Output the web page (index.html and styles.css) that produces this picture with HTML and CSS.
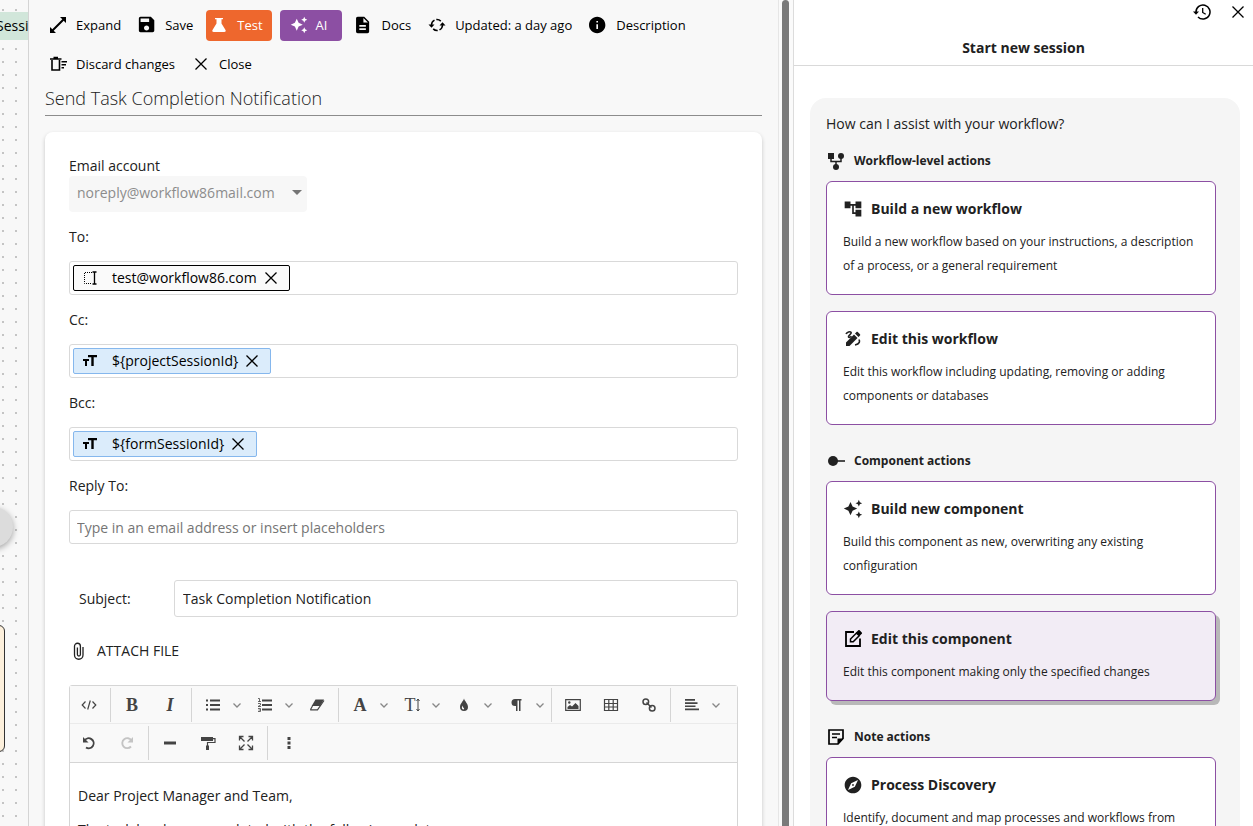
FILE: index.html
```
<!DOCTYPE html>
<html lang="en">
<head>
<meta charset="utf-8">
<meta name="viewport" content="width=device-width, initial-scale=1">
<title>Send Task Completion Notification</title>
<link rel="stylesheet" href="styles.css">
</head>
<body>
<svg class="sprite" aria-hidden="true">
  <symbol id="i-x" viewBox="0 0 18 18"><path d="M3.500 3.500l11 11M14.500 3.500l-11 11" fill="none" stroke="currentColor" stroke-width="1.300"/></symbol>
  <symbol id="i-sparkle" viewBox="0 0 24 24"><path d="M9 3.500l2.500 5.500L17 11.500l-5.500 2.500L9 19.500l-2.500-5.500L1 11.500l5.500-2.500zM19 1l1.200 2.800L23 5l-2.800 1.200L19 9l-1.200-2.800L15 5l2.800-1.200zM19 15l1.200 2.800L23 19l-2.800 1.200L19 23l-1.200-2.800L15 19l2.800-1.200z"/></symbol>
  <symbol id="i-chev" viewBox="0 0 10 10"><path d="M1.500 3.500L5 7l3.500-3.500" fill="none" stroke="#888" stroke-width="1.300"/></symbol>
  <symbol id="i-tt" viewBox="0 0 16 14"><path d="M6 1h9v2.300h-3.300V12H9.300V3.300H6zM1 5h6v2H5v5H3V7H1z"/></symbol>
</svg>
<div class="app">
  <div class="canvas" aria-hidden="true">
    <div class="node node-green">Session</div>
    <div class="node-round"></div>
    <div class="node node-beige"></div>
  </div>

  <main class="editor">
    <div class="editor-body">
      <div class="actions">
        <button class="action" type="button"><svg class="icon" viewBox="0 0 18 18"><path d="M11 1h6v6l-2.300-2.300L4.700 14.700 7 17H1v-6l2.300 2.300 10-10z"/></svg>Expand</button>
        <button class="action" type="button"><svg class="icon" viewBox="2 2 21 21"><path d="M17 3H5c-1.100 0-2 .9-2 2v14c0 1.100.9 2 2 2h14c1.100 0 2-.9 2-2V7l-4-4zm-5 16c-1.660 0-3-1.340-3-3s1.340-3 3-3 3 1.340 3 3-1.340 3-3 3zm3-10H5V5h10v4z"/></svg>Save</button>
        <button class="action action-test" type="button"><svg class="icon" viewBox="0 0 18 18"><path d="M5 2h8v1.300h-1.500v4.200l4 6.500c.6 1-.1 2-1.200 2H3.700c-1.100 0-1.800-1-1.200-2l4-6.500V3.300H5z"/></svg>Test</button>
        <button class="action action-ai" type="button"><svg class="icon"><use href="#i-sparkle"/></svg>AI</button>
        <button class="action" type="button"><svg class="icon" viewBox="2 1 21 22"><path d="M14 2H6c-1.100 0-1.990.9-1.990 2L4 20c0 1.100.890 2 1.990 2H18c1.100 0 2-.9 2-2V8l-6-6zm2 16H8v-2h8v2zm0-4H8v-2h8v2zm-3-5V3.500L18.500 9H13z"/></svg>Docs</button>
        <button class="action" type="button"><svg class="icon" viewBox="0 0 18 18"><path d="M3.500 9.500V9a5.500 5.500 0 0 1 3-4.900M8.300 3.500a5.500 5.500 0 0 1 4.500 1.600M14.500 8.500V9a5.500 5.500 0 0 1-3 4.900M9.700 14.500a5.500 5.500 0 0 1-4.500-1.600" fill="none" stroke="currentColor" stroke-width="1.500"/><path d="M.5 8.500h6l-3 3.200zM11.500 9.500h6l-3-3.200z"/></svg>Updated: a day ago</button>
        <button class="action" type="button"><svg class="icon" viewBox="2 1 22 22"><path d="M12 2C6.480 2 2 6.480 2 12s4.480 10 10 10 10-4.480 10-10S17.520 2 12 2zm1 15h-2v-6h2v6zm0-8h-2V7h2v2z"/></svg>Description</button>
        <button class="action" type="button"><svg class="icon" viewBox="0 0 18 18"><path d="M3 5v10h7.500V5M1 4h11.500M4.500 2.500h4.500" fill="none" stroke="currentColor" stroke-width="1.600"/><path d="M12.500 6H18v1.500h-5.500zM12.500 9H17v1.500h-4.500zM12.500 12H15v1.500h-2.500z"/></svg>Discard changes</button>
        <button class="action" type="button"><svg class="icon"><use href="#i-x"/></svg>Close</button>
      </div>

      <input class="title" type="text" aria-label="Component name" value="Send Task Completion Notification">

      <form class="card">
        <label class="label" for="account">Email account</label>
        <div class="select-wrap">
          <select class="select" id="account" disabled><option>noreply@workflow86mail.com</option></select>
        </div>

        <div class="field">
          <label class="label" for="to">To:</label>
          <div class="box">
            <span class="chip chip-plain"><svg class="chip-icon" viewBox="0 0 16 16"><path d="M10 2.500H2.500v11H10" fill="none" stroke="currentColor" stroke-dasharray="1 1"/><path d="M10.500 2h4M10.500 14h4M12.500 2v12" fill="none" stroke="currentColor" stroke-width="1.300"/></svg>test@workflow86.com<button class="chip-x" type="button" aria-label="Remove"><svg class="icon"><use href="#i-x"/></svg></button></span>
            <input class="box-input" id="to" type="text">
          </div>
        </div>
        <div class="field">
          <label class="label" for="cc">Cc:</label>
          <div class="box">
            <span class="chip"><svg class="chip-icon"><use href="#i-tt"/></svg>${projectSessionId}<button class="chip-x" type="button" aria-label="Remove"><svg class="icon"><use href="#i-x"/></svg></button></span>
            <input class="box-input" id="cc" type="text">
          </div>
        </div>
        <div class="field">
          <label class="label" for="bcc">Bcc:</label>
          <div class="box">
            <span class="chip"><svg class="chip-icon"><use href="#i-tt"/></svg>${formSessionId}<button class="chip-x" type="button" aria-label="Remove"><svg class="icon"><use href="#i-x"/></svg></button></span>
            <input class="box-input" id="bcc" type="text">
          </div>
        </div>
        <div class="field">
          <label class="label" for="reply">Reply To:</label>
          <div class="box">
            <input class="box-input" id="reply" type="text" placeholder="Type in an email address or insert placeholders">
          </div>
        </div>

        <div class="subject">
          <label class="subject-label" for="subject">Subject:</label>
          <input class="subject-input" id="subject" type="text" value="Task Completion Notification">
        </div>

        <button class="attach" type="button"><svg class="icon" viewBox="0 0 18 18"><path d="M13 5v8a4 4 0 0 1-8.500 0V4.200a2.900 2.900 0 0 1 5.900 0v8.300a1.500 1.500 0 0 1-3 0V5.500" fill="none" stroke="currentColor" stroke-width="1.300"/></svg>ATTACH FILE</button>

        <div class="rich">
          <div class="bar bar-first">
            <div class="group">
              <button class="tool" type="button" aria-label="Code view"><svg class="glyph" viewBox="0 0 16 16"><path d="M4.500 4.500L1.200 8l3.300 3.500M11.500 4.500L14.800 8l-3.300 3.500M9.300 3.500l-2.600 9" fill="none" stroke="currentColor" stroke-width="1.200"/></svg></button>
            </div>
            <div class="group">
              <button class="tool tool-serif" type="button">B</button>
              <button class="tool tool-serif tool-italic" type="button">I</button>
            </div>
            <div class="group">
              <button class="tool tool-drop" type="button" aria-label="Unordered list"><svg class="glyph" viewBox="0 0 16 16"><path d="M5 2.500h10v2H5zM5 7h10v2H5zM5 11.500h10v2H5zM1 2.500h2v2H1zM1 7h2v2H1zM1 11.500h2v2H1z"/></svg><svg class="chev"><use href="#i-chev"/></svg></button>
              <button class="tool tool-drop" type="button" aria-label="Ordered list"><svg class="glyph" viewBox="0 0 16 16"><path d="M5 2.500h10v2H5zM5 7h10v2H5zM5 11.500h10v2H5z"/><path d="M1 1.500h1.500v3M1 4.500h3M1 6.500h2.500v1.500L1 9.500h3M1 11.500h2.500v3H1M1.500 13h2" fill="none" stroke="currentColor" stroke-width=".8"/></svg><svg class="chev"><use href="#i-chev"/></svg></button>
              <button class="tool" type="button" aria-label="Clear formatting"><svg class="glyph" viewBox="0 0 16 16"><path d="M6.500 2.500H15L11 9H2.700z"/><path d="M3 8.500h8M1.500 12.500l2-3.500M1.200 12.800h7.300L15 3.500" fill="none" stroke="currentColor" stroke-width="1.200"/></svg></button>
            </div>
            <div class="group">
              <button class="tool tool-serif tool-drop" type="button"><span class="letter">A</span><svg class="chev"><use href="#i-chev"/></svg></button>
              <button class="tool tool-serif tool-light tool-drop" type="button"><span class="letter">T<svg class="height" viewBox="0 0 4 14"><path d="M2 1v12M.5 3L2 1l1.500 2M.5 11L2 13l1.500-2" fill="none" stroke="currentColor"/></svg></span><svg class="chev"><use href="#i-chev"/></svg></button>
              <button class="tool tool-drop" type="button" aria-label="Text color"><svg class="glyph" viewBox="0 0 16 16"><path fill-rule="evenodd" d="M8 1.500c.5 2.500 4 5 4 8.500a4 4 0 0 1-8 0c0-3.500 3.500-6 4-8.500zM6.500 8.500c-1 1.500-.8 3.500.8 4 1-.1 1-.9.500-1.500-.8-.7-1.200-1.300-1.300-2.500z"/></svg><svg class="chev"><use href="#i-chev"/></svg></button>
              <button class="tool tool-drop" type="button" aria-label="Paragraph format"><svg class="glyph" viewBox="0 0 16 16"><path d="M7 2h6.500v1.500h-1V14H11V3.500H9.500V14H8V9H7a3.500 3.500 0 0 1 0-7z"/></svg><svg class="chev"><use href="#i-chev"/></svg></button>
            </div>
            <div class="group">
              <button class="tool" type="button" aria-label="Insert image"><svg class="glyph" viewBox="0 0 16 16"><path d="M.7 2.700h14.600v10.600H.7z" fill="none" stroke="currentColor" stroke-width="1.200"/><path d="M2.500 12v-2l2.500-2 2 1.500L10.500 6l3 3v3z"/><circle cx="4.300" cy="5.500" r="1.200"/></svg></button>
              <button class="tool" type="button" aria-label="Insert table"><svg class="glyph" viewBox="0 0 16 16"><path d="M1.500 2.500h13v11h-13zM1.500 6.500h13M1.500 10h13M5.800 2.500v11M10.200 2.500v11" fill="none" stroke="currentColor" stroke-width="1.200"/></svg></button>
              <button class="tool" type="button" aria-label="Insert link"><svg class="glyph" viewBox="0 0 16 16"><g fill="none" stroke="currentColor" stroke-width="1.500"><circle cx="4.800" cy="4.800" r="2.800"/><circle cx="11.200" cy="11.200" r="2.800"/><path d="M5.500 5.500l5 5"/></g></svg></button>
            </div>
            <div class="group">
              <button class="tool tool-drop" type="button" aria-label="Align"><svg class="glyph" viewBox="0 0 16 16"><path d="M1 2h10v1.700H1zM1 5.200h12.500v1.700H1zM1 8.400h10.500v1.700H1zM1 11.600h14v1.700H1z"/></svg><svg class="chev"><use href="#i-chev"/></svg></button>
            </div>
          </div>
          <div class="bar">
            <div class="group">
              <button class="tool" type="button" aria-label="Undo"><svg class="glyph" viewBox="0 0 16 16"><path d="M3.500 5.500A5 5 0 1 1 5 12.500" fill="none" stroke="currentColor" stroke-width="1.900"/><path d="M2 2v5.500h5.500z"/></svg></button>
              <button class="tool" type="button" aria-label="Redo" disabled><svg class="glyph" viewBox="0 0 16 16"><path d="M12.500 5.500A5 5 0 1 0 12 11.500" fill="none" stroke="currentColor" stroke-width="1.900"/><path d="M14 2v5.500H8.500z"/></svg></button>
            </div>
            <div class="group">
              <button class="tool" type="button" aria-label="Horizontal line"><svg class="glyph" viewBox="0 0 16 16"><path d="M2 6.500h12v3H2z"/></svg></button>
              <button class="tool" type="button" aria-label="Format painter"><svg class="glyph" viewBox="0 0 16 16"><path d="M1 2h12v4H1zM6 10.500h3V15H6z"/><path d="M13 3.700h2v3.800H7.500V11" fill="none" stroke="currentColor" stroke-width="1.200"/></svg></button>
              <button class="tool" type="button" aria-label="Fullscreen"><svg class="glyph" viewBox="0 0 16 16"><path d="M1.500 5.500v-4h4M10.500 1.500h4v4M14.500 10.500v4h-4M5.500 14.500h-4v-4M1.500 1.500l5 5M14.500 1.500l-5 5M14.500 14.500l-5-5M1.500 14.500l5-5" fill="none" stroke="currentColor" stroke-width="1.300"/></svg></button>
            </div>
            <div class="group">
              <button class="tool" type="button" aria-label="More"><svg class="glyph" viewBox="0 0 16 16"><path d="M6.500 2h3v3h-3zM6.500 6.500h3v3h-3zM6.500 11h3v3h-3z"/></svg></button>
            </div>
          </div>
          <div class="content" contenteditable="true" role="textbox" aria-label="Email body">
            <p>Dear Project Manager and Team,</p>
            <p>The task has been completed with the following updates:</p>
          </div>
        </div>
      </form>
    </div>
    <div class="scrollbar"><div class="thumb"></div></div>
  </main>

  <aside class="chat">
    <header class="chat-head">
      <div class="chat-tools">
        <button class="plain" type="button" aria-label="History"><svg class="icon" viewBox="0 0 18 18"><path d="M3 9.500V9a7 7 0 1 1 2 4.900" fill="none" stroke="currentColor" stroke-width="1.500"/><path d="M0 8.500h6l-3 3.200z"/><path d="M9.700 5v4.500l3 1.800" fill="none" stroke="currentColor" stroke-width="1.300"/></svg></button>
        <button class="plain" type="button" aria-label="Close"><svg class="icon"><use href="#i-x"/></svg></button>
      </div>
      <h2 class="chat-title">Start new session</h2>
    </header>
    <div class="bubble">
      <p class="question">How can I assist with your workflow?</p>

      <section class="section">
        <h3 class="section-title"><svg class="icon20" viewBox="0 0 20 20"><path d="M2 2h6v6H2z"/><circle cx="15" cy="5" r="3"/><circle cx="10" cy="16" r="3"/><path d="M5 7v3.500h10V7M10 10.500V14" fill="none" stroke="currentColor" stroke-width="1.500"/></svg>Workflow-level actions</h3>
        <button class="option" type="button">
          <span class="option-title"><svg class="icon20" viewBox="0 0 24 24"><path d="M22 11V3h-7v3H9V3H2v8h7V8h2v10h4v3h7v-8h-7v3h-2V8h2v3z"/></svg>Build a new workflow</span>
          <span class="option-text">Build a new workflow based on your instructions, a description of a process, or a general requirement</span>
        </button>
        <button class="option" type="button">
          <span class="option-title"><svg class="icon20" viewBox="0 0 20 20"><path d="M3 13.500l8-8 3.500 3.500-8 8H3zM12 4.500l1.500-1.500c.4-.4.9-.4 1.300 0l2.200 2.200c.4.4.4.9 0 1.300L15.500 8z"/><path d="M3 5c1-2 4-2.800 5-1.700C9.200 5 4.500 6.500 5.500 8c.6.8 2 .3 3-.7M15.700 10.500c1.500 1.300 1.300 4.500-3.700 5.500" fill="none" stroke="currentColor" stroke-width="1.600"/></svg>Edit this workflow</span>
          <span class="option-text">Edit this workflow including updating, removing or adding components or databases</span>
        </button>
      </section>

      <section class="section">
        <h3 class="section-title"><svg class="icon20" viewBox="0 0 20 20"><circle cx="7" cy="10" r="5"/><path d="M11 9.200h8v1.600h-8z"/></svg>Component actions</h3>
        <button class="option" type="button">
          <span class="option-title"><svg class="icon20"><use href="#i-sparkle"/></svg>Build new component</span>
          <span class="option-text">Build this component as new, overwriting any existing configuration</span>
        </button>
        <button class="option option-active" type="button">
          <span class="option-title"><svg class="icon20" viewBox="0 0 20 20"><path d="M11 3H3v14h14V9.500" fill="none" stroke="#000" stroke-width="1.800"/><path d="M7.500 12.700V10l6-6 2.700 2.700-6 6z" fill="none" stroke="#000" stroke-width="1.500"/><path fill="#000" d="M13 3.500l2.300-2.300c.4-.4.9-.4 1.300 0l2.200 2.200c.4.4.4.9 0 1.300L16.500 7z"/></svg>Edit this component</span>
          <span class="option-text">Edit this component making only the specified changes</span>
        </button>
      </section>

      <section class="section">
        <h3 class="section-title"><svg class="icon20" viewBox="0 0 20 20"><path d="M3 3h14v8.500L12 17H3zM6 7h8M6 10.500h5" fill="none" stroke="#000" stroke-width="1.700"/><path fill="#000" d="M11.500 17v-5.500H17z"/></svg>Note actions</h3>
        <button class="option" type="button">
          <span class="option-title"><svg class="icon20" viewBox="0 0 24 24"><path d="M12 10.900c-.610 0-1.100.490-1.100 1.100s.490 1.100 1.100 1.100c.610 0 1.100-.490 1.100-1.100s-.490-1.100-1.100-1.100zM12 2C6.480 2 2 6.480 2 12s4.480 10 10 10 10-4.480 10-10S17.520 2 12 2zm2.190 12.190L6 18l3.810-8.190L18 6l-3.810 8.190z"/></svg>Process Discovery</span>
          <span class="option-text">Identify, document and map processes and workflows from conversations</span>
        </button>
      </section>
    </div>
  </aside>
</div>
</body>
</html>
```
FILE: styles.css
```
* { box-sizing: border-box; }

body {
  margin: 0;
  font-family: "Open Sans", "Noto Sans", sans-serif;
  font-size: 14px;
  line-height: 20px;
  color: #212121;
  overflow: hidden;
}

button, input, select {
  font: inherit;
  color: inherit;
  margin: 0;
}

button {
  padding: 0;
  border: 0;
  background: none;
  cursor: pointer;
}

h2, h3, p { margin: 0; }
svg { fill: currentColor; flex: none; }

.sprite { display: none; }
.icon { display: block; width: 18px; height: 18px; }
.icon20 { display: block; width: 20px; height: 20px; }

.app {
  display: grid;
  grid-template-columns: 28px minmax(0, 1fr) 460px;
  height: 100vh;
}

/* Workflow canvas behind the editor */
.canvas {
  position: relative;
  overflow: hidden;
  background: #f8f8f8 radial-gradient(circle at 3px 10px, #c4c4c4 1px, transparent 1px) 0 0 / 13px 13px;
}

.node { position: absolute; }

.node-green {
  top: 12px;
  left: 0;
  width: 60px;
  height: 28px;
  line-height: 28px;
  color: #000;
  background: #d1e6da;
  text-indent: -4px;
}

.node-round {
  position: absolute;
  top: 507px;
  left: -27px;
  width: 40px;
  height: 40px;
  border-radius: 50%;
  background: #dcdcdc;
  box-shadow: 0 2px 6px rgba(0, 0, 0, .35);
}

.node-beige {
  top: 625px;
  left: -60px;
  width: 65px;
  height: 127px;
  border: 1px solid #333;
  border-radius: 6px;
  background: #fdf0dc;
}

/* Editor pane */
.editor {
  display: flex;
  min-width: 0;
  min-height: 0;
  overflow: hidden;
  border-left: 1px solid #d4d4d4;
  background: #f8f8f8;
}

.editor-body {
  flex: 1;
  min-width: 0;
  padding: 10px 16px 0;
  overflow: hidden;
}

.scrollbar {
  width: 15px;
  padding: 0 4px 0 3px;
  border-left: 1px solid #e6e6e6;
  background: #fafafa;
}

.thumb {
  height: 100%;
  border-radius: 4px 4px 0 0;
  background: #7a7a7a;
}

.actions {
  display: flex;
  flex-wrap: wrap;
  gap: 8px;
}

.action {
  display: flex;
  align-items: center;
  gap: 9px;
  height: 31px;
  padding: 0 5px 1px 4px;
  border-radius: 4px;
  font-size: 13px;
  color: #000;
  white-space: nowrap;
}

.action-test {
  padding-right: 9px;
  color: #fff;
  background: #ee672d;
}

.action-ai {
  padding: 0 15px 1px 10px;
  gap: 8px;
  color: #fff;
  background: #8c4fa3;
}

.title {
  display: block;
  width: 100%;
  height: 36px;
  padding: 0;
  border: 0;
  border-bottom: 1px solid #8c8c8c;
  background: none;
  font-size: 18px;
  font-weight: 300;
  outline: 0;
}

.card {
  margin-top: 16px;
  padding: 24px;
  border-radius: 8px;
  background: #fff;
  box-shadow: 0 2px 4px rgba(0, 0, 0, .2);
}

.label { display: block; }

.select-wrap {
  position: relative;
  width: 238px;
}

.select-wrap::after {
  content: "";
  position: absolute;
  top: 14px;
  right: 5px;
  border: 5px solid transparent;
  border-top-color: #757575;
  border-bottom: 0;
}

.select {
  display: block;
  width: 100%;
  height: 36px;
  padding: 0 8px 2px;
  border: 0;
  border-radius: 4px;
  background: #f7f7f7;
  color: #8c8c8c;
  opacity: 1;
  appearance: none;
}

.field { margin-top: 15px; }

.box {
  display: flex;
  align-items: center;
  height: 34px;
  margin-top: 14px;
  padding: 0 3px;
  border: 1px solid #d9d9d9;
  border-radius: 3px;
}

.box-input {
  flex: 1;
  min-width: 0;
  padding: 2px 4px 0;
  border: 0;
  background: none;
  outline: 0;
}

.box-input::placeholder { color: #757575; }

.chip {
  display: flex;
  align-items: center;
  height: 26px;
  padding: 0 9px 0 8px;
  border: 1px solid #85b7ed;
  border-radius: 2px;
  background: #dbecfb;
  color: #000;
}

.chip-plain {
  border-color: #000;
  background: #fafafa;
}

.chip-icon {
  width: 16px;
  height: 16px;
  margin-right: 14px;
}

.chip-x { margin-left: 5px; }

.subject {
  display: flex;
  align-items: center;
  margin-top: 36px;
  padding-left: 10px;
}

.subject-label { width: 95px; }

.subject-input {
  flex: 1;
  min-width: 0;
  height: 37px;
  padding: 0 8px;
  border: 1px solid #d9d9d9;
  border-radius: 3px;
  outline: 0;
}

.attach {
  display: flex;
  align-items: center;
  gap: 9px;
  margin-top: 24px;
  padding-left: 1px;
}

/* Rich text editor */
.rich {
  margin-top: 24px;
  border: 1px solid #d5d5d5;
  border-radius: 3px;
  color: #444;
}

.bar {
  display: flex;
  flex-wrap: wrap;
  align-items: center;
  min-height: 39px;
  border-bottom: 1px solid #d5d5d5;
  background: #f9f9f9;
}

.bar-first {
  min-height: 38px;
  border-bottom-color: #ebebeb;
}

.group {
  display: flex;
  height: 34px;
  padding: 0 2px;
}

.group:first-child { padding-left: 0; }
.group + .group { border-left: 1px solid #d5d5d5; }

.tool {
  display: flex;
  align-items: center;
  justify-content: center;
  width: 38px;
  height: 34px;
}

.tool:disabled { color: #c4c4c4; }

.tool-drop {
  justify-content: flex-start;
  width: 52px;
  padding-left: 11px;
  gap: 11px;
}

.tool-serif {
  font-family: "Liberation Serif", serif;
  font-size: 18px;
  font-weight: 700;
}

.tool-light { font-weight: 400; }
.tool-italic { font-style: italic; }

.letter {
  display: flex;
  align-items: center;
  justify-content: center;
  width: 16px;
}

.height { width: 4px; height: 14px; }
.glyph { width: 16px; height: 16px; }
.chev { width: 10px; height: 10px; }

.content {
  display: flex;
  flex-direction: column;
  gap: 14px;
  min-height: 300px;
  padding: 23px 8px;
  color: #212121;
}

/* Assistant pane */
.chat {
  display: flex;
  flex-direction: column;
  min-width: 0;
  overflow: hidden;
  border-left: 1px solid #dcdcdc;
  background: #fff;
}

.chat-head {
  flex: none;
  padding: 3px 6px 7px;
  border-bottom: 1px solid #d9d9d9;
}

.chat-tools {
  display: flex;
  justify-content: flex-end;
  gap: 18px;
  color: #000;
}

.chat-title {
  margin-top: 17px;
  font-size: 14px;
  font-weight: 700;
  text-align: center;
}

.bubble {
  flex: none;
  display: flex;
  flex-direction: column;
  margin: 32px 13px 0 16px;
  padding: 16px 24px 16px 16px;
  border-radius: 16px;
  background: #f5f5f5;
}

.section {
  display: flex;
  flex-direction: column;
  gap: 16px;
  margin-bottom: 26px;
}

.question { margin-bottom: 17px; }

.section-title {
  display: flex;
  align-items: center;
  gap: 8px;
  margin-bottom: -6px;
  font-size: 12px;
  font-weight: 700;
}

.option {
  display: flex;
  flex-direction: column;
  gap: 10px;
  padding: 16px;
  border: 1px solid #8c4fa3;
  border-radius: 6px;
  background: #fff;
  text-align: left;
}

.option-active {
  background: #f2ecf5;
  box-shadow: 4px 4px 0 #b8b8b8;
}

.option-title {
  display: flex;
  align-items: center;
  gap: 8px;
  line-height: 22px;
  font-weight: 700;
}

.option-text {
  font-size: 12px;
  line-height: 24px;
}
```
